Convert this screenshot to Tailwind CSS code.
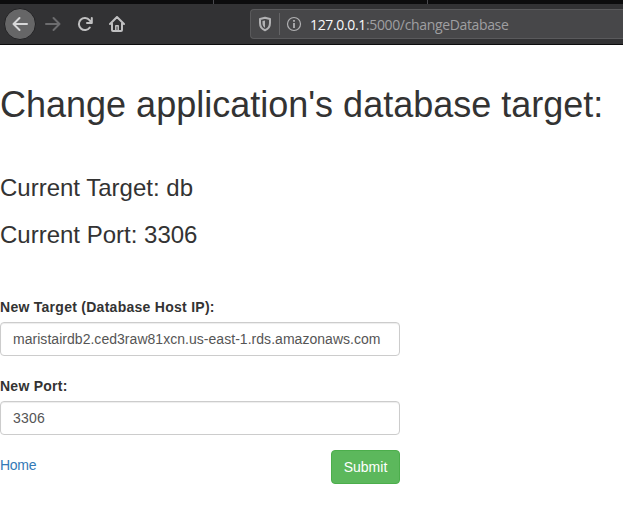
<!DOCTYPE html>
<html lang="en"><head><meta charset="utf-8"><title>Change database</title>
<script src="https://cdn.jsdelivr.net/npm/@tailwindcss/browser@4"></script></head>
<body class="bg-white text-[#333] text-[14px] leading-[20px] font-['Liberation_Sans',Arial,sans-serif] overflow-hidden h-[506px]">
<header>
<div class="h-1 bg-[#0c0c0d] flex"><div class="w-[214px] border-r border-[#4a4a4f]"></div><div class="w-[214px] border-r border-[#4a4a4f]"></div></div>
<div class="h-[41px] bg-[#323234] border-b border-[#0c0c0d] flex items-center pl-1">
<div class="size-8 rounded-full bg-[#666667] border border-[#222224] flex items-center justify-center text-[#d8d8d9]"><svg class="size-4" viewBox="0 0 16 16" fill="none" stroke="currentColor" stroke-width="2" stroke-linecap="round" stroke-linejoin="round"><path d="M15 8H1.500M7.500 2l-6 6 6 6"/></svg></div>
<svg class="size-4 ml-[9px] text-[#6c6c6e]" viewBox="0 0 16 16" fill="none" stroke="currentColor" stroke-width="2" stroke-linecap="round" stroke-linejoin="round"><path d="M1 8h13.500M8.500 2l6 6-6 6"/></svg>
<svg class="size-4 ml-4 text-[#c0c0c1]" viewBox="0 0 16 16" fill="none" stroke="currentColor" stroke-width="2" stroke-linecap="round" stroke-linejoin="round"><path d="M12.800 11.500A6 6 0 1 1 12.500 4.200L14.500 6.200M14.800 2v5H10"/></svg>
<svg class="size-4 ml-4 text-[#c0c0c1]" viewBox="0 0 16 16" fill="none" stroke="currentColor" stroke-width="2" stroke-linecap="round" stroke-linejoin="round"><path d="M1 8l7-7 7 7M3 7.500V14q0 1 1 1h8q1 0 1-1V7.500"/><path d="M6.800 14V9.800h2.400V14" stroke-width="1.500"/></svg>
<div class="ml-[125px] h-[30px] flex-1 bg-[#474749] border border-r-0 border-[#5a5a5c] rounded-l-sm flex items-center pl-[6px] text-[#b1b1b3]">
<svg class="size-4" viewBox="0 0 16 16"><path d="M8 1.800l5 1.200v4c0 3.500-1.800 6-5 7.200-3.200-1.200-5-3.700-5-7.200V3z" fill="none" stroke="currentColor" stroke-width="2" stroke-linejoin="round"/><path d="M8 4.500v7.300C6.200 10.800 5.500 9 5.500 7V5z" fill="currentColor"/></svg>
<div class="w-px h-[22px] bg-[#646466] ml-[6px] mr-[6px]"></div>
<svg class="size-4" viewBox="0 0 16 16"><circle cx="8" cy="8" r="6.500" fill="none" stroke="currentColor" stroke-width="1.200"/><path d="M7.100 4h1.800v1.800H7.100zM7.100 7h1.800v5H7.100z" fill="currentColor"/></svg>
<span class="ml-2 mt-[2px] text-[14px] tracking-[-0.35px] whitespace-nowrap font-['Open_Sans',sans-serif]"><span class="text-[#f9f9fa]">127.0.0.1</span><span class="text-[#9f9fa1]">:5000/changeDatabase</span></span>
</div></div></header>
<main>
<h1 class="pt-[40px] text-[36px] leading-[40px] whitespace-nowrap">Change application's database target:</h1>
<h3 class="mt-[50px] text-[24px] leading-[26px]">Current Target: db</h3>
<h3 class="mt-[21px] text-[24px] leading-[26px]">Current Port: 3306</h3>
<form class="mt-[49px] w-[400px]">
<label class="block font-bold mb-[5px] tracking-[0.27px]">New Target (Database Host IP):</label>
<input class="block w-full h-[34px] px-3 border border-[#ccc] rounded text-[#555] tracking-[0.035px] shadow-[inset_0_1px_1px_rgba(0,0,0,0.075)]" value="maristairdb2.ced3raw81xcn.us-east-1.rds.amazonaws.com">
<label class="block font-bold mt-5 mb-[5px] tracking-[0.25px]">New Port:</label>
<input class="block w-full h-[34px] px-3 border border-[#ccc] rounded text-[#555] tracking-[0.25px] shadow-[inset_0_1px_1px_rgba(0,0,0,0.075)]" value="3306">
<div class="mt-[15px] flex justify-between"><a class="mt-[5px] text-[#337ab7] tracking-[-0.3px]">Home</a><button type="button" class="h-[34px] w-[69px] rounded border border-[#4cae4c] bg-[#5cb85c] text-white">Submit</button></div>
</form></main></body></html>
